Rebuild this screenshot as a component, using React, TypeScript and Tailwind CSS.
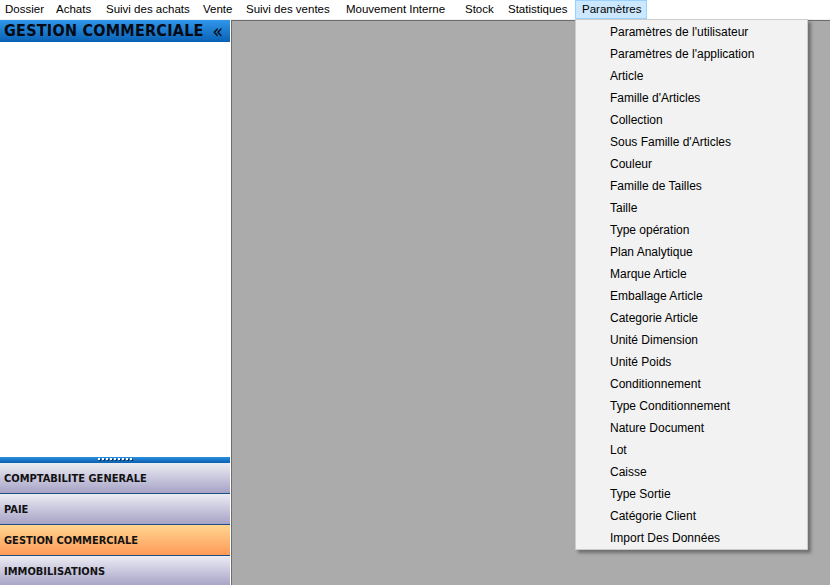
const menus = [
  { label: "Dossier", w: "w-[49px] pl-[5px]" },
  { label: "Achats", w: "w-[50px] pl-[7px]" },
  { label: "Suivi des achats", w: "w-[97px] pl-[7px]" },
  { label: "Vente", w: "w-[43px] pl-[7px]" },
  { label: "Suivi des ventes", w: "w-[100px] pl-[7px]" },
  { label: "Mouvement Interne", w: "w-[119px] pl-[7px]" },
  { label: "Stock", w: "w-[43px] pl-[7px]" },
  { label: "Statistiques", w: "w-[74px] pl-[7px]" },
];

const items = [
  "Paramètres de l'utilisateur",
  "Paramètres de l'application",
  "Article",
  "Famille d'Articles",
  "Collection",
  "Sous Famille d'Articles",
  "Couleur",
  "Famille de Tailles",
  "Taille",
  "Type opération",
  "Plan Analytique",
  "Marque Article",
  "Emballage Article",
  "Categorie Article",
  "Unité Dimension",
  "Unité Poids",
  "Conditionnement",
  "Type Conditionnement",
  "Nature Document",
  "Lot",
  "Caisse",
  "Type Sortie",
  "Catégorie Client",
  "Import Des Données",
];

const modules = [
  { label: "COMPTABILITE GENERALE", active: false },
  { label: "PAIE", active: false },
  { label: "GESTION COMMERCIALE", active: true },
  { label: "IMMOBILISATIONS", active: false },
];

export default function App() {
  return (
    <div
      className="relative w-[830px] h-[585px] overflow-hidden flex flex-col bg-white"
      style={{ fontFamily: "'Liberation Sans', Arial, sans-serif" }}
    >
      {/* menu bar */}
      <div className="h-[20px] shrink-0 flex items-stretch bg-white border-b border-[#f0f0f0] text-[11.5px] text-black">
        {menus.map((m) => (
          <div key={m.label} className={`${m.w} h-[19px] flex items-center whitespace-nowrap`}>
            {m.label}
          </div>
        ))}
        <div className="w-[72px] h-[19px] flex items-center pl-[6px] bg-[#cce8ff] border border-[#99d1ff] whitespace-nowrap">
          Paramètres
        </div>
      </div>

      <div className="flex-1 flex min-h-0">
        {/* left navigation panel */}
        <div className="w-[231px] flex flex-col bg-white pr-[1px] overflow-hidden">
          <div
            className="h-[22px] shrink-0 flex items-center justify-between pl-[4px] pr-[7px] bg-gradient-to-b from-[#2f97ea] to-[#0861b4]"
            style={{ fontFamily: "'DejaVu Sans Condensed', 'DejaVu Sans', sans-serif" }}
          >
            <span className="text-[16px] leading-[20px] font-bold text-[#050a14] tracking-[0.25px]">GESTION COMMERCIALE</span>
            <span className="text-[19px] leading-[20px] text-[#050a14]">«</span>
          </div>
          <div className="h-[415px] shrink-0" />
          <div className="h-[6px] shrink-0 bg-gradient-to-b from-[#2a8fe0] to-[#0c5fae] flex items-start justify-center pt-[1px]">
            <div className="flex gap-[2px]">
              {Array.from({ length: 9 }).map((_, i) => (
                <div key={i} className="w-[2px] h-[2px] bg-white shadow-[1px_1px_0_#0a2c55]" />
              ))}
            </div>
          </div>
          {modules.map((m) => (
            <div
              key={m.label}
              className={`h-[31px] shrink-0 flex items-center pl-[4px] pt-[3px] text-[11px] font-bold text-[#121212] border-b border-[#1e4c85] ${
                m.active
                  ? "bg-gradient-to-b from-[#ffd590] to-[#ff9a57]"
                  : "bg-gradient-to-b from-[#ececf3] to-[#a7a3c6]"
              }`}
              style={{ fontFamily: "'DejaVu Sans Condensed', 'DejaVu Sans', sans-serif" }}
            >
              {m.label}
            </div>
          ))}
        </div>

        {/* MDI client area */}
        <div className="flex-1 bg-[#ababab] border-l border-t border-[#6d6d6d]" />
      </div>

      {/* dropdown menu */}
      <div className="absolute left-[575px] top-[19px] w-[233px] bg-[#f2f2f2] border border-[#cccccc] pt-[1px] shadow-[3px_3px_3px_rgba(0,0,0,0.35)]">
        {items.map((it) => (
          <div key={it} className="h-[22px] flex items-center pl-[34px] text-[12px] text-black whitespace-nowrap">
            {it}
          </div>
        ))}
      </div>
    </div>
  );
}
